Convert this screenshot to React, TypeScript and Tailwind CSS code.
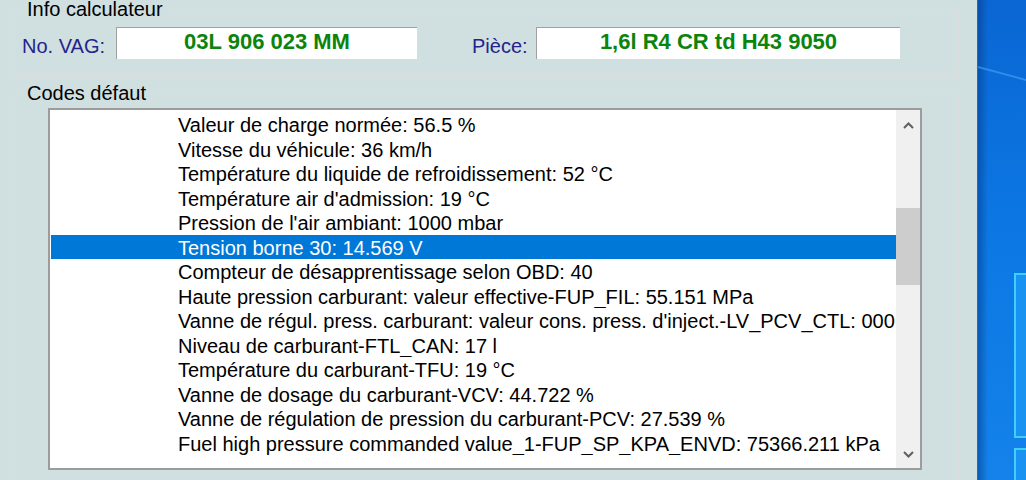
import React from 'react'

const ROWS = [
  'Valeur de charge normée: 56.5 %',
  'Vitesse du véhicule: 36 km/h',
  'Température du liquide de refroidissement: 52 °C',
  "Température air d'admission: 19 °C",
  "Pression de l'air ambiant: 1000 mbar",
  'Tension borne 30: 14.569 V',
  'Compteur de désapprentissage selon OBD: 40',
  'Haute pression carburant: valeur effective-FUP_FIL: 55.151 MPa',
  "Vanne de régul. press. carburant: valeur cons. press. d'inject.-LV_PCV_CTL: 000.000 %",
  'Niveau de carburant-FTL_CAN: 17 l',
  'Température du carburant-TFU: 19 °C',
  'Vanne de dosage du carburant-VCV: 44.722 %',
  'Vanne de régulation de pression du carburant-PCV: 27.539 %',
  'Fuel high pressure commanded value_1-FUP_SP_KPA_ENVD: 75366.211 kPa',
]
const SELECTED = 5

function Chevron({ up }: { up?: boolean }) {
  return (
    <svg width="11" height="7" viewBox="0 0 11 7">
      <path
        d={up ? 'M1 6 L5.5 1.5 L10 6' : 'M1 1 L5.5 5.5 L10 1'}
        fill="none"
        stroke="#606060"
        strokeWidth="2"
      />
    </svg>
  )
}

function Field({ value, width }: { value: string; width: string }) {
  return (
    <div
      className={`${width} h-[32px] border-t border-l border-[#a0a0a0] bg-white text-center text-[22px] font-bold leading-[28px] text-[#0b840b]`}
    >
      {value}
    </div>
  )
}

export default function App() {
  return (
    <div className="flex h-[480px] w-[1026px] overflow-hidden font-['Liberation_Sans',Arial,sans-serif] text-[20px]">
      <div className="w-[977px] shrink-0 bg-[#d0dfdf] pl-[13px] pr-[18px]">
        <fieldset className="border border-[#dcdcdc] pb-[17px]">
          <legend className="ml-[12px] px-[1px] leading-[18px] text-black">Info calculateur</legend>
          <div className="flex items-start pt-[9px] pl-[8px]">
            <span className="mt-[7px] w-[94px] leading-[24px] text-[#24248c]">No. VAG:</span>
            <Field value="03L 906 023 MM" width="w-[301px]" />
            <span className="mt-[7px] w-[119px] pl-[55px] leading-[24px] text-[#24248c]">Pièce:</span>
            <Field value="1,6l R4 CR td H43 9050" width="w-[364px]" />
          </div>
        </fieldset>

        <fieldset className="mt-[7px] border border-[#dcdcdc] pb-[40px]">
          <legend className="ml-[12px] px-[1px] leading-[18px] text-black">Codes défaut</legend>
          <div className="pt-[6px] pl-[34px]">
            <div className="flex h-[362px] w-[874px] border-2 border-[#9c9c9c] bg-white">
              <div className="min-w-0 flex-1 overflow-hidden pt-[2px] pl-[1px]">
                {ROWS.map((r, i) => (
                  <div
                    key={i}
                    className={`h-[24.5px] overflow-hidden whitespace-nowrap pt-[2px] pl-[127px] leading-[22.5px] ${
                      i === SELECTED ? 'bg-[#0078d7] text-white' : 'text-black'
                    }`}
                  >
                    {r}
                  </div>
                ))}
              </div>
              <div className="flex w-[24px] shrink-0 flex-col bg-[#f0f0f0]">
                <div className="flex h-[30px] items-center justify-center">
                  <Chevron up />
                </div>
                <div className="mt-[68px] h-[77px] bg-[#cdcdcd]" />
                <div className="flex-1" />
                <div className="flex h-[28px] items-center justify-center">
                  <Chevron />
                </div>
              </div>
            </div>
          </div>
        </fieldset>
      </div>

      <div className="w-px shrink-0 bg-[#56646a]" />

      <div className="relative flex-1 bg-gradient-to-b from-[#0a66d3] via-[#0c78e4] to-[#1482ea]">
        <svg className="absolute inset-0" width="48" height="480" viewBox="0 0 48 480">
          <defs>
            <linearGradient id="shade" x1="0" x2="1" y1="0" y2="0">
              <stop offset="0" stopColor="#053d8c" stopOpacity="0.55" />
              <stop offset="1" stopColor="#053d8c" stopOpacity="0" />
            </linearGradient>
          </defs>
          <rect x="0" y="0" width="10" height="480" fill="url(#shade)" />
          <path d="M0 67 L48 80" stroke="#4aa3f5" strokeOpacity="0.6" strokeWidth="2" />
          <rect x="37" y="274" width="20" height="163" fill="#1a92f2" stroke="#3fd0ff" strokeWidth="2" />
          <rect x="37" y="449" width="20" height="40" fill="#1a92f2" stroke="#3fd0ff" strokeWidth="2" />
        </svg>
      </div>
    </div>
  )
}
